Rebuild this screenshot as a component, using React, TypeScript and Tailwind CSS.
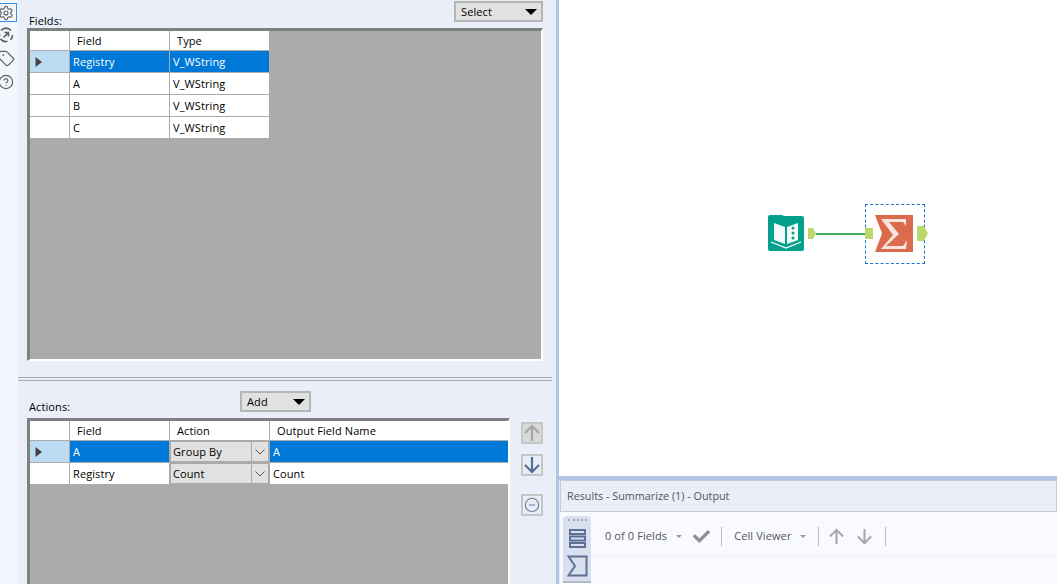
import React from "react";
import { Settings, Tag, CircleHelp, CircleMinus } from "lucide-react";
import { FaCheck } from "react-icons/fa";

const font = { fontFamily: '"Open Sans", "Noto Sans", sans-serif' };

function Caret({ large }: { large?: boolean }) {
  return <span className={large ? "border-x-[6px] border-t-[6px] border-x-transparent border-t-black" : "border-x-[3px] border-t-[3px] border-x-transparent border-t-[#999]"} />;
}

function Drop({ label, w }: { label: string; w: string }) {
  return (
    <div className={`${w} h-[21px] border-2 border-[#b5b5b5] bg-[#e1e1e1] flex items-center justify-between pl-[5px] pr-[4px] text-[11px] text-black`}>
      <span className="pt-[1px] tracking-[0.1px]">{label}</span>
      <Caret large />
    </div>
  );
}

function Arrow() {
  return (
    <svg width="8" height="12" viewBox="0 0 8 12" className="ml-[5px]">
      <path d="M0.5 1 L7 6 L0.5 11 Z" fill="#444" />
    </svg>
  );
}

function UpDown({ down, color, size = 18, sw = 2.2 }: { down?: boolean; color: string; size?: number; sw?: number }) {
  return (
    <svg width={size} height={size} viewBox="0 0 18 18" fill="none" stroke={color} strokeWidth={sw} className={down ? "rotate-180 shrink-0" : "shrink-0"}>
      <path d="M9 17V2M2 9L9 2L16 9" />
    </svg>
  );
}

function RowHead({ active }: { active?: boolean }) {
  return (
    <div className={`w-[39px] h-[21px] flex items-center ${active ? "bg-[#bcdcf4]" : "bg-white"}`}>
      {active && <Arrow />}
    </div>
  );
}

function Cell({ w, active, children }: { w: string; active?: boolean; children: React.ReactNode }) {
  return (
    <div className={`${w} h-[21px] flex items-center pl-[3px] pt-[2px] text-[11px] tracking-[0.1px] ${active ? "bg-[#0078d7] text-white" : "bg-white text-black"}`}>
      {children}
    </div>
  );
}

function Head({ w, children }: { w: string; children?: React.ReactNode }) {
  return <div className={`${w} h-[19px] bg-white flex items-center pl-[7px] pt-[2px] text-[11px] tracking-[0.1px] text-black`}>{children}</div>;
}

function Combo({ label }: { label: string }) {
  return (
    <div className="w-[99px] h-[21px] bg-[#aaa] flex text-[11px] text-black">
      <div className="flex-1 m-[1px] mr-0 bg-[#e1e1e1] flex items-center pl-[2px] pt-[2px] tracking-[0.1px]">{label}</div>
      <div className="w-[16px] m-[1px] bg-[#e1e1e1] flex items-center justify-center">
        <svg width="10" height="6" viewBox="0 0 10 6" fill="none" stroke="#555" strokeWidth="1">
          <path d="M0.5 0.5L5 5L9.5 0.5" />
        </svg>
      </div>
    </div>
  );
}

function SideBtn({ children, className = "" }: { children: React.ReactNode; className?: string }) {
  return <div className={`w-[22px] h-[22px] border-2 border-[#c6c6c6] flex items-center justify-center ${className}`}>{children}</div>;
}

export default function App() {
  return (
    <div style={font} className="w-[1057px] h-[584px] overflow-hidden flex bg-white">
      {/* tool rail */}
      <div className="w-[18px] h-full bg-[#f3f6fc] shrink-0 flex flex-col items-start text-[#5f5f5f]">
        <div className="w-[17px] h-[19px] mt-[3px] border-y border-r border-[#3d8fdc] flex items-center">
          <Settings size={16} strokeWidth={1.7} className="-ml-[2px]" />
        </div>
        <svg width="16" height="16" viewBox="0 0 16 16" fill="none" stroke="#5f5f5f" strokeWidth="1.6" className="-ml-[2px] mt-[5px]">
          <path d="M3 3.5a6.5 6.5 0 0 1 10 0M14.5 8a6.5 6.5 0 0 1-2 4.8M9.5 14.3a6.5 6.5 0 0 1-7-2.5M1.6 9.5a6.5 6.5 0 0 1 0-3" />
          <path d="M5.5 10.5 L10.5 5.5 M6.5 5.5 H10.5 V9.5" />
        </svg>
        <Tag size={17} strokeWidth={1.7} className="-ml-[2px] mt-[7px]" />
        <CircleHelp size={16} strokeWidth={1.7} className="-ml-[2px] mt-[7px]" />
      </div>

      {/* config panel */}
      <div className="w-[538px] h-full bg-[#e9eef9] shrink-0 flex flex-col">
        <div className="h-[377px] flex flex-col pl-[9px] pr-[13px] pt-[1px]">
          <div className="h-[27px] flex items-start justify-between">
            <span className="text-[11px] text-black mt-[13px] ml-[2px] leading-[14px] tracking-[0.1px]">Fields:</span>
            <Drop label="Select" w="w-[89px]" />
          </div>
          <div className="h-[333px] bg-[#ababab] border-t-[3px] border-l-[3px] border-[#808080] border-r-2 border-r-white border-b-2 border-b-white">
            <div className="flex flex-col gap-[1px] w-[239px]">
              <div className="flex gap-[1px]">
                <Head w="w-[39px]" />
                <Head w="w-[99px]">Field</Head>
                <Head w="w-[99px]">Type</Head>
              </div>
              {["Registry", "A", "B", "C"].map((f, i) => (
                <div key={f} className="flex gap-[1px]">
                  <RowHead active={i === 0} />
                  <Cell w="w-[99px]" active={i === 0}>{f}</Cell>
                  <Cell w="w-[99px]" active={i === 0}>V_WString</Cell>
                </div>
              ))}
            </div>
          </div>
        </div>

        <div className="h-[4px] border-y border-[#aaa] mr-[4px]" />

        <div className="flex-1 flex flex-col pl-[9px] pt-[10px] min-h-0">
          <div className="h-[27px] flex items-start">
            <span className="text-[11px] text-black mt-[9px] ml-[2px] leading-[14px] w-[211px] tracking-[0.1px]">Actions:</span>
            <Drop label="Add" w="w-[71px]" />
          </div>
          <div className="flex flex-1 min-h-0">
            <div className="w-[483px] h-full bg-[#ababab] border-t-[3px] border-l-[3px] border-[#808080] border-r-2 border-r-white">
              <div className="flex flex-col gap-[1px]">
                <div className="flex gap-[1px]">
                  <Head w="w-[39px]" />
                  <Head w="w-[99px]">Field</Head>
                  <Head w="w-[99px]">Action</Head>
                  <Head w="w-[238px]">Output Field Name</Head>
                </div>
                <div className="flex gap-[1px]">
                  <RowHead active />
                  <Cell w="w-[99px]" active>A</Cell>
                  <Combo label="Group By" />
                  <Cell w="w-[238px]" active>A</Cell>
                </div>
                <div className="flex gap-[1px]">
                  <RowHead />
                  <Cell w="w-[99px]">Registry</Cell>
                  <Combo label="Count" />
                  <Cell w="w-[238px]">Count</Cell>
                </div>
              </div>
            </div>
            <div className="flex flex-col ml-[11px] pt-[4px]">
              <SideBtn className="bg-[#d9d9d9]"><UpDown color="#a6a6a6" /></SideBtn>
              <SideBtn className="mt-[10px] bg-[#e8ecf5]"><UpDown down color="#566d94" /></SideBtn>
              <SideBtn className="mt-[18px] bg-[#e8ecf5]"><CircleMinus size={16} strokeWidth={1.6} color="#6e7f9c" /></SideBtn>
            </div>
          </div>
        </div>
      </div>

      {/* splitter */}
      <div className="w-[3px] h-full bg-[#b0c4e6] shrink-0" />

      {/* right */}
      <div className="flex-1 flex flex-col min-w-0">
        <div className="h-[476px] bg-white relative shrink-0">
          {/* input tool */}
          <svg width="36" height="36" viewBox="0 0 36 36" className="absolute left-[209px] top-[215px]">
            <path d="M2 0h12l2 1h18a2 2 0 0 1 2 2v31a2 2 0 0 1-2 2H2a2 2 0 0 1-2-2V2a2 2 0 0 1 2-2z" fill="#03a08c" />
            <path d="M6 8 L17 12 V29 L6 25Z" fill="#f2fbf9" />
            <path d="M30 8 L19 12 V29 L30 25Z" fill="#f2fbf9" />
            <path d="M3 27 L18 33 L33 27" stroke="#fff" strokeWidth="1.3" fill="none" />
            <circle cx="25" cy="13" r="1.5" fill="#03a08c" /><circle cx="25" cy="18" r="1.5" fill="#03a08c" /><circle cx="25" cy="23" r="1.5" fill="#03a08c" />
          </svg>
          <svg width="8" height="11" viewBox="0 0 8 11" className="absolute left-[249px] top-[228px]">
            <path d="M0 0h5l3 5.5-3 5.5H0z" fill="#bad96a" />
          </svg>
          <div className="absolute left-[257px] top-[233px] w-[55px] h-[2px] bg-[#3fae62]" />
          <div className="absolute left-[306px] top-[204px] w-[60px] h-[60px] border border-dashed border-[#1b76c9]" />
          <div className="absolute left-[306px] top-[228px] w-[8px] h-[11px] bg-[#bad96a]" />
          <svg width="38" height="37" viewBox="0 0 38 37" className="absolute left-[316px] top-[215px]">
            <path d="M0 0H38V37H0L7 18.5Z" fill="#dc6a4d" />
            <path d="M6 4H31V11L28 7H14L24 19L11 31H28L32 25L31 34H6L18 20Z" fill="#f7e4dd" />
          </svg>
          <svg width="11" height="15" viewBox="0 0 11 15" className="absolute left-[358px] top-[226px]">
            <path d="M0 0h7l4 7.5-4 7.5H0z" fill="#bad96a" />
          </svg>
        </div>
        <div className="h-[4px] bg-[#b0c4e6] shrink-0" />
        <div className="flex-1 bg-[#e9eef9] pl-[1px] min-h-0 flex flex-col">
          <div className="h-[32px] border border-[#c9c9c9] flex items-center pl-[6px] text-[10.8px] text-[#555] shrink-0">
            Results - Summarize (1) - Output
          </div>
          <div className="flex-1 flex pl-[3px] pt-[4px] min-h-0 bg-[#f8faff]">
            <div className="w-[28px] bg-[#d9e1f0] rounded-t-[4px] flex flex-col items-center pt-[3px] shrink-0 border-b-2 border-b-[#b4b9c6] mb-[1px]">
              <div className="w-[19px] border-t-2 border-dotted border-[#aaa]" />
              <svg width="17" height="19" viewBox="0 0 17 19" fill="none" stroke="#5d7196" strokeWidth="2" className="mt-[8px]">
                <rect x="1" y="1" width="15" height="4" /><rect x="1" y="7.5" width="15" height="4" /><rect x="1" y="14" width="15" height="4" />
              </svg>
              <svg width="21" height="22" viewBox="0 0 21 22" fill="none" stroke="#5d7196" strokeWidth="2" className="mt-[7px]">
                <path d="M1.5 1.5H19.5V20.5H1.5L8 11Z" />
              </svg>
            </div>
            <div className="flex-1 min-w-0">
              <div className="h-[41px] border-b border-[#eef1f7] flex items-center pl-[14px] text-[11px] text-[#555]">
                <span className="tracking-[0.1px]">0 of 0 Fields</span>
                <span className="ml-[9px] flex"><Caret /></span>
                <FaCheck size={17} color="#8f8f8f" className="ml-[11px]" />
                <div className="w-px h-[19px] bg-[#bbb] ml-[11px]" />
                <span className="ml-[12px] tracking-[0.1px]">Cell Viewer</span>
                <span className="ml-[9px] flex"><Caret /></span>
                <div className="w-px h-[19px] bg-[#bbb] ml-[12px]" />
                <span className="ml-[9px] flex"><UpDown color="#a8a8a8" size={17} sw={2.2} /></span>
                <span className="ml-[11px] flex"><UpDown down color="#a8a8a8" size={17} sw={2.2} /></span>
                <div className="w-px h-[19px] bg-[#bbb] ml-[12px]" />
              </div>
            </div>
          </div>
        </div>
      </div>
    </div>
  );
}
